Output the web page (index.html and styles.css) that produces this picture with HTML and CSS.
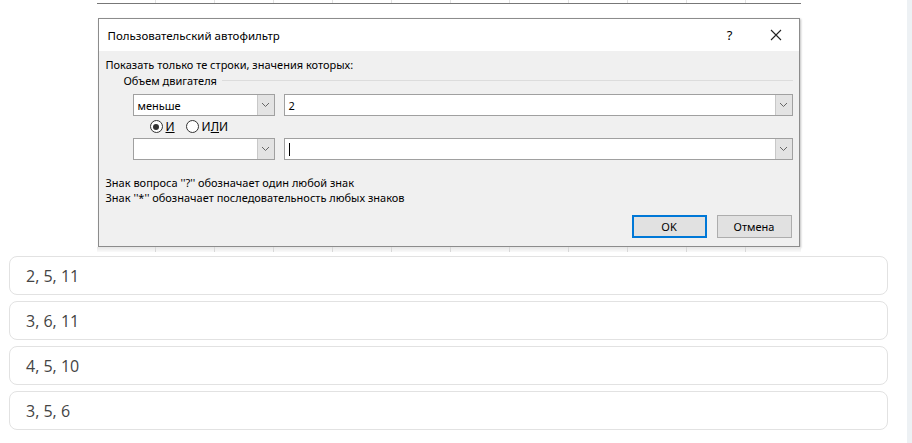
FILE: index.html
```html
<!DOCTYPE html>
<html lang="ru">
<head>
  <meta charset="UTF-8">
  <title>Пользовательский автофильтр</title>
  <link rel="stylesheet" href="styles.css">
</head>
<body>
  <div class="page">
    <main class="content">
      <!-- скриншот диалога Excel -->
      <div class="shot">
        <div class="sheet-top"></div>
        <div class="dialog">
          <div class="dlg-title">
            <span class="dlg-name">Пользовательский автофильтр</span>
            <span class="help">?</span>
            <span class="close">
              <svg width="12" height="12" viewBox="0 0 12 12"><path d="M1 1 L11 11 M11 1 L1 11" stroke="#222" stroke-width="1.1" fill="none"/></svg>
            </span>
          </div>
          <div class="dlg-body">
            <div class="prompt">Показать только те строки, значения которых:</div>
            <div class="group-label"><span>Объем двигателя</span><i class="rule"></i></div>

            <div class="cond-row">
              <div class="combo op"><span class="combo-text">меньше</span><span class="drop"><svg width="9" height="6" viewBox="0 0 9 6"><path d="M1 1 L4.5 4.5 L8 1" stroke="#666" fill="none"/></svg></span></div>
              <div class="combo val"><span class="combo-text">2</span><span class="drop"><svg width="9" height="6" viewBox="0 0 9 6"><path d="M1 1 L4.5 4.5 L8 1" stroke="#666" fill="none"/></svg></span></div>
            </div>

            <div class="logic">
              <label class="radio"><i class="dot checked"></i><span><u>И</u></span></label>
              <label class="radio"><i class="dot"></i><span>И<u>Л</u>И</span></label>
            </div>

            <div class="cond-row">
              <div class="combo op"><span class="combo-text"></span><span class="drop"><svg width="9" height="6" viewBox="0 0 9 6"><path d="M1 1 L4.5 4.5 L8 1" stroke="#666" fill="none"/></svg></span></div>
              <div class="combo val"><span class="combo-text"><i class="caret"></i></span><span class="drop"><svg width="9" height="6" viewBox="0 0 9 6"><path d="M1 1 L4.5 4.5 L8 1" stroke="#666" fill="none"/></svg></span></div>
            </div>

            <div class="hint">
              <div>Знак вопроса ''?'' обозначает один любой знак</div>
              <div>Знак ''*'' обозначает последовательность любых знаков</div>
            </div>

            <div class="actions">
              <button type="button" class="btn default">OK</button>
              <button type="button" class="btn">Отмена</button>
            </div>
          </div>
        </div>
        <div class="sheet-bottom"></div>
      </div>

      <!-- варианты ответа -->
      <div class="answers">
        <div class="answer">2, 5, 11</div>
        <div class="answer">3, 6, 11</div>
        <div class="answer">4, 5, 10</div>
        <div class="answer">3, 5, 6</div>
      </div>
    </main>
    <div class="scroll-strip"></div>
  </div>
</body>
</html>
```

FILE: styles.css
```css
body {
  margin: 0;
  padding: 0;
  background: #fff;
  font-family: 'Open Sans', 'Noto Sans', sans-serif;
  color: #333;
}

.page {
  display: flex;
  min-height: 443px;
}

.content {
  flex: 1;
  padding: 0 19px 0 9px;
}

.scroll-strip {
  width: 5px;
  background: #edf1f4;
}

/* скриншот */
.shot {
  width: 704px;
  margin: 0 auto;
  font-family: 'Noto Sans', 'Open Sans', sans-serif;
  font-size: 11px;
  color: #000;
}

.sheet-top {
  height: 3px;
  border-bottom: 1px solid #777;
  margin-bottom: 14px;
  background: repeating-linear-gradient(90deg, transparent 0 58px, #e2e2e2 58px 59px);
}

.dialog {
  margin: 0 1px;
  border: 1px solid #8c8c8c;
  background: #f0f0f0;
  box-shadow: 1px 1px 2px rgba(0, 0, 0, 0.25);
}

.dlg-title {
  display: flex;
  align-items: center;
  height: 32px;
  background: #fff;
  padding: 0 17px 0 9px;
}

.dlg-name {
  flex: 1;
  font-size: 11.5px;
}

.help {
  font-size: 13px;
  margin-right: 37px;
}

.close {
  display: flex;
}

.dlg-body {
  padding: 6px 6px 8px 7px;
}

.prompt, .group-label, .hint div {
  line-height: 15px;
}

.group-label {
  display: flex;
  align-items: center;
  padding-left: 18px;
  margin-top: 1px;
}

.rule {
  flex: 1;
  height: 1px;
  background: #dcdcdc;
  margin-left: 5px;
}

.cond-row {
  display: flex;
  gap: 9px;
  padding-left: 27px;
  margin-top: 6px;
}

.cond-row + .logic + .cond-row {
  margin-top: 2px;
}

.combo {
  display: flex;
  height: 22px;
  box-sizing: border-box;
  border: 1px solid #a0a0a0;
  background: #fff;
}

.combo.op {
  width: 142px;
}

.combo.val {
  flex: 1;
}

.combo-text {
  flex: 1;
  display: flex;
  align-items: center;
  padding-left: 4px;
}

.caret {
  width: 1px;
  height: 13px;
  background: #000;
}

.drop {
  width: 16px;
  display: flex;
  align-items: center;
  justify-content: center;
  background: #e3e3e3;
  border-left: 1px solid #c8c8c8;
}

.logic {
  display: flex;
  gap: 11px;
  height: 19px;
  align-items: center;
  padding-left: 44px;
  margin-top: 1px;
  font-size: 12px;
}

.radio {
  display: flex;
  align-items: center;
  gap: 3px;
}

.dot {
  width: 11px;
  height: 11px;
  border: 1px solid #333;
  border-radius: 50%;
  background: #fff;
  display: flex;
  align-items: center;
  justify-content: center;
}

.dot.checked::after {
  content: "";
  width: 6px;
  height: 6px;
  border-radius: 50%;
  background: #333;
}

.hint {
  margin-top: 15px;
}

.actions {
  display: flex;
  justify-content: flex-end;
  gap: 10px;
  margin-top: 10px;
  padding-right: 1px;
}

.btn {
  width: 75px;
  height: 23px;
  box-sizing: border-box;
  border: 1px solid #adadad;
  background: #e1e1e1;
  font-family: 'Noto Sans', sans-serif;
  font-size: 11px;
  padding: 0;
  color: #000;
}

.btn.default {
  border: 2px solid #0078d7;
}

.sheet-bottom {
  height: 5px;
  background: repeating-linear-gradient(90deg, transparent 0 58px, #d8d8d8 58px 59px), linear-gradient(#e6e6e6, #fafafa);
}

/* ответы */
.answers {
  display: flex;
  flex-direction: column;
  gap: 6px;
  margin-top: 4px;
}

.answer {
  height: 39px;
  box-sizing: border-box;
  border: 1px solid #e2e2e2;
  border-radius: 8px;
  padding-left: 16px;
  display: flex;
  align-items: center;
  font-size: 16px;
  color: #444;
}
```
